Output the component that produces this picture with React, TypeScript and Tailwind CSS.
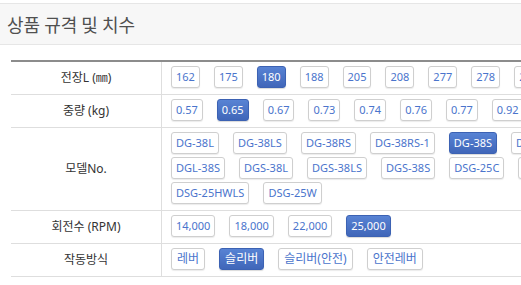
import React from "react";

type Opt = { label: string; active?: boolean };

const rows: { title: string; ko?: boolean; opts: Opt[] }[] = [
  {
    title: "전장L (㎜)",
    opts: ["162", "175", "180", "188", "205", "208", "277", "278", "290"].map((l) => ({ label: l, active: l === "180" })),
  },
  {
    title: "중량 (kg)",
    opts: ["0.57", "0.65", "0.67", "0.73", "0.74", "0.76", "0.77", "0.92"].map((l) => ({ label: l, active: l === "0.65" })),
  },
  {
    title: "모델No.",
    opts: [
      "DG-38L",
      "DG-38LS",
      "DG-38RS",
      "DG-38RS-1",
      "DG-38S",
      "DG-38SR",
      "DGL-38S",
      "DGS-38L",
      "DGS-38LS",
      "DGS-38S",
      "DSG-25C",
      "DSG-25H",
      "DSG-25HWLS",
      "DSG-25W",
    ].map((l) => ({ label: l, active: l === "DG-38S" })),
  },
  {
    title: "회전수 (RPM)",
    opts: ["14,000", "18,000", "22,000", "25,000"].map((l) => ({ label: l, active: l === "25,000" })),
  },
  {
    title: "작동방식",
    ko: true,
    opts: ["레버", "슬리버", "슬리버(안전)", "안전레버"].map((l) => ({ label: l, active: l === "슬리버" })),
  },
];

function Btn({ o, ko }: { o: Opt; ko?: boolean }) {
  const size = ko ? "text-[12px] px-[5px]" : "text-[11px] px-[4px]";
  return o.active ? (
    <span
      className={`flex h-[22px] items-center whitespace-nowrap rounded-[3px] border border-[#3c62b3] bg-gradient-to-b from-[#5883d4] to-[#4066b9] text-white shadow-[0_1px_1px_rgba(0,0,0,0.15)] ${size}`}
    >
      {o.label}
    </span>
  ) : (
    <span
      className={`flex h-[22px] items-center whitespace-nowrap rounded-[3px] border border-[#cfcfcf] bg-white text-[#4a74cc] shadow-[0_1px_1px_rgba(0,0,0,0.08)] ${size}`}
    >
      {o.label}
    </span>
  );
}

export default function App() {
  return (
    <div
      className="h-[285px] w-[521px] overflow-hidden bg-white pt-[3px]"
      style={{ fontFamily: '"Noto Sans", "Noto Sans CJK KR", sans-serif' }}
    >
      <div className="flex h-[42px] items-center border-y border-[#e6e6e6] bg-[#f7f7f7] pl-[7px]">
        <h2 className="text-[18px] font-normal text-[#505050]" style={{ fontFamily: '"Noto Sans CJK KR", sans-serif' }}>
          상품 규격 및 치수
        </h2>
      </div>
      <div className="ml-[11px] mt-[15px] w-[600px] border-t-2 border-[#8c8c8c]">
        {rows.map((r) => (
          <div key={r.title} className="flex border-b border-[#dedede]">
            <div className="flex w-[150px] shrink-0 items-center justify-center text-[12px] text-[#333]">
              {r.title}
            </div>
            <div className="flex w-[430px] flex-wrap gap-x-[14px] gap-y-[3px] border-l border-[#dedede] pb-[6px] pl-[9px] pt-[4px]">
              {r.opts.map((o) => (
                <Btn key={o.label} o={o} ko={r.ko} />
              ))}
            </div>
          </div>
        ))}
      </div>
    </div>
  );
}
